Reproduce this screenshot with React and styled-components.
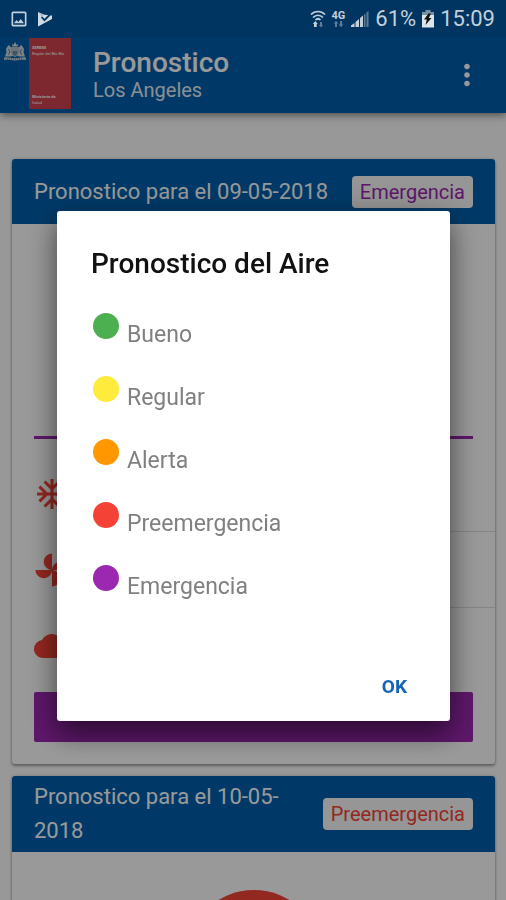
import styled, { createGlobalStyle, css } from "styled-components";
import { MdAcUnit, MdCloud, MdMoreVert, MdOutlineImage } from "react-icons/md";

const LEVELS = {
  bueno: { label: "Bueno", color: "#4caf50" },
  regular: { label: "Regular", color: "#ffeb3b" },
  alerta: { label: "Alerta", color: "#ff9800" },
  preemergencia: { label: "Preemergencia", color: "#f44336" },
  emergencia: { label: "Emergencia", color: "#9c27b0" },
};

const GlobalStyle = createGlobalStyle`
  * {
    box-sizing: border-box;
  }
  body {
    margin: 0;
    background: #fdfdfd;
    font-family: Roboto, "Liberation Sans", sans-serif;
  }
  #root {
    height: 100vh;
    overflow: hidden;
  }
`;

const StatusBar = styled.div`
  position: relative;
  z-index: 3;
  height: 37px;
  padding: 0 11px 0 9px;
  display: flex;
  align-items: center;
  background: #003562;
  color: #c3d0da;
  font-size: 22px;
`;

const Notifications = styled.div`
  display: flex;
  align-items: center;
  gap: 8px;
  margin-right: auto;
`;

const Signals = styled.div`
  display: flex;
  align-items: center;
  gap: 6px;
`;

const AppBar = styled.header`
  position: relative;
  height: 76px;
  padding: 0 22px 0 4px;
  display: flex;
  align-items: center;
  background: #0060ad;
  color: white;
  box-shadow: 0 2px 8px rgba(0, 0, 0, 0.5);
`;

const Heading = styled.div`
  flex: 1 1 auto;
  margin-left: 22px;
`;

const Title = styled.h1`
  margin: 0;
  font-weight: 500;
  font-size: 28px;
  line-height: 30px;
`;

const Subtitle = styled.div`
  font-size: 20px;
  line-height: 24px;
  opacity: 0.9;
`;

const MenuButton = styled.button`
  display: flex;
  padding: 0;
  border: 0;
  background: none;
  color: inherit;
  font-size: 34px;
`;

const Forecasts = styled.main`
  padding: 46px 11px 0 12px;
  display: flex;
  flex-direction: column;
  gap: 12px;
`;

const Card = styled.section`
  border-radius: 3px;
  overflow: hidden;
  background: white;
  box-shadow: 0 2px 3px rgba(0, 0, 0, 0.35), 0 0 3px rgba(0, 0, 0, 0.2);
`;

const CardHeader = styled.div`
  min-height: 65px;
  padding: 4px 22px;
  display: flex;
  align-items: center;
  justify-content: space-between;
  gap: 16px;
  background: #0060ad;
  color: white;
`;

const CardTitle = styled.h2`
  margin: 0;
  font-weight: 400;
  font-size: 22px;
  line-height: 34px;
`;

const Badge = styled.span`
  flex: 0 0 auto;
  padding: 0 8px;
  border-radius: 4px;
  background: #fafafa;
  color: ${(p) => p.$color};
  font-size: 20px;
  line-height: 32px;
`;

const CardBody = styled.div`
  padding: 38px 22px 22px;
`;

const Gauge = styled.div`
  width: 136px;
  height: 136px;
  margin: 0 auto 38px;
  border-radius: 50%;
  background: ${(p) => p.$color};
`;

const Rule = styled.hr`
  height: 3px;
  margin: 0 0 17px;
  border: 0;
  background: ${(p) => p.$color};
`;

const Conditions = styled.ul`
  margin: 0 -22px 8px 0;
  padding: 0;
  list-style: none;
`;

const Condition = styled.li`
  height: 76px;
  display: flex;
  align-items: center;
  gap: 24px;
  color: #f44336;
  font-size: 36px;
`;

const ConditionText = styled.div`
  flex: 1 1 auto;
  align-self: stretch;
  ${(p) =>
    p.$divided &&
    css`
      border-bottom: 1px solid #dedede;
    `}
`;

const Strip = styled.div`
  height: 50px;
  border-radius: 2px;
  background: ${(p) => p.$color};
`;

const Backdrop = styled.div`
  position: fixed;
  inset: 0;
  z-index: 2;
  padding: 32px 56px 0 57px;
  display: flex;
  align-items: center;
  background: rgba(0, 0, 0, 0.4);
`;

const Dialog = styled.div`
  flex: 1 1 auto;
  padding: 35px 34px 17px;
  border-radius: 3px;
  background: white;
  box-shadow: 0 14px 24px rgba(0, 0, 0, 0.4), 0 4px 36px rgba(0, 0, 0, 0.25);
`;

const DialogTitle = styled.h2`
  margin: 0 0 31px;
  font-weight: 500;
  font-size: 28px;
  line-height: 36px;
  color: #111;
`;

const Legend = styled.ul`
  margin: 0 0 71px;
  padding: 0 2px;
  display: flex;
  flex-direction: column;
  gap: 29px;
  list-style: none;
`;

const LegendItem = styled.li`
  display: flex;
  align-items: flex-end;
  gap: 8px;
  height: 34px;
  font-size: 23px;
  line-height: 24px;
  color: #808080;
`;

const Dot = styled.span`
  align-self: flex-start;
  width: 26px;
  height: 26px;
  border-radius: 50%;
  background: ${(p) => p.$color};
`;

const Actions = styled.div`
  display: flex;
  justify-content: flex-end;
`;

const DialogButton = styled.button`
  padding: 0 9px;
  border: 0;
  background: none;
  color: #1565b5;
  font: 700 19px/34px Roboto, "Liberation Sans", sans-serif;
`;

const FanIcon = () => (
  <svg width="36" height="36" viewBox="0 0 24 24" fill="currentColor">
    <path d="M12 12c0-3 2.500-5.500 5.500-5.500S23 9 23 12H12z" />
    <path d="M12 12c0 3-2.500 5.500-5.500 5.500S1 15 1 12h11z" />
    <path d="M12 12c-3 0-5.500-2.500-5.500-5.500S9 1 12 1v11z" />
    <path d="M12 12c3 0 5.500 2.500 5.500 5.500S15 23 12 23V12z" />
  </svg>
);

const PlayCheckIcon = () => (
  <svg width="16" height="16" viewBox="0 0 16 16" fill="none">
    <path d="M1 1l4.500 2.500L15 4.500V8L1 15.500z" fill="#cfdae4" />
    <path d="M1 1l6 2.500L5 6z" fill="#a9bccb" />
    <path d="M4.500 6l3 3.200L14 2.500" stroke="#003562" strokeWidth="1.800" />
  </svg>
);

const WifiIcon = () => (
  <svg width="16" height="18" viewBox="0 0 16 18" fill="none">
    <g stroke="currentColor" strokeWidth="1.700">
      <path d="M1 4.500c4-4 10-4 14 0" />
      <path d="M3 7.500c3-3 7-3 10 0" />
      <path d="M5.500 10c1.500-1.500 3.500-1.500 5 0" />
    </g>
    <path d="M4 17v-3H2.800L5.300 11l2.500 3H6.700v3z" fill="currentColor" />
    <path d="M10 12v3H8.800L11 17.500l2.200-2.500H12v-3z" fill="#5c7d99" />
  </svg>
);

const Lte = styled.div`
  display: flex;
  flex-direction: column;
  align-items: center;
  font-weight: 700;
  font-size: 11px;
  line-height: 10px;
`;

const DataArrowsIcon = () => (
  <svg width="11" height="6" viewBox="0 0 11 6" fill="#5c7d99">
    <path d="M2 6V2.500H.500L3 0l2.500 2.500H4V6z" />
    <path d="M7 0v3.500H5.500L8 6l2.500-2.500H9V0z" />
  </svg>
);

const SignalIcon = () => (
  <svg width="18" height="17" viewBox="0 0 18 17">
    <path
      d="M0 17v-1.500L3.500 13v4zM4.500 17v-5L8 9v8zM9 17V8l3-2.500V17z"
      fill="currentColor"
    />
    <path
      d="M13 17V4.800l1.500-1.300V17zM15.500 17V2.500L17.500 1v16z"
      fill="#5c7d99"
    />
  </svg>
);

const BatteryIcon = () => (
  <svg width="12" height="18" viewBox="0 0 12 18">
    <path d="M3.500 0h5v2H12v4H0V2h3.500z" fill="#7891a5" />
    <path d="M0 5h12v12.500H0z" fill="#dde5ea" />
    <path d="M6.500 3.500L2 9.500h2.800L3.500 15l6-7H6.800L9 3.500z" fill="#111" />
  </svg>
);

const CrestIcon = () => (
  <svg width="22" height="19" viewBox="0 0 22 19" fill="none">
    <path d="M8.500 4.500L8 2l1.500 1L11 0l1.500 3L14 2l-.500 2.500z" fill="#dfe5e8" />
    <path
      d="M7 5h8v6.500c0 2-2.500 3-4 3.500-1.500-.500-4-1.500-4-3.500z"
      fill="#b4c2cb"
    />
    <path
      d="M8.500 9h5v2.500c0 1-1.500 2-2.500 2.400-1-.400-2.500-1.400-2.500-2.400z"
      fill="#6f8da4"
    />
    <path
      d="M7 5.500L5 3 3.500 4.500 2 7l.500 3L1 14.500h6l2-1L7 11zM15 5.500L17 3l1.500 1.500L20 7l-.500 3 1.500 4.500h-6l-2-1L15 11z"
      fill="#d1dade"
    />
    <path d="M4 7l2 2-1.500 3.500M18 7l-2 2 1.500 3.500" stroke="#55758f" />
    <path
      d="M0 15.500c4-1 6 .500 11 .500s7-1.500 11-.500V18c-4-.500-6 .500-11 .500S4 17.500 0 18z"
      fill="#c6d0d5"
    />
    <path d="M3 17h16" stroke="#55758f" strokeDasharray="1 1" />
  </svg>
);

const Brand = styled.div`
  align-self: flex-start;
  padding-top: 1px;
  display: flex;
  align-items: flex-start;
  gap: 3px;
  > svg {
    margin-top: 4px;
  }
`;

const Plaque = styled.div`
  width: 42px;
  height: 71px;
  padding: 7px 3px 3px;
  display: flex;
  flex-direction: column;
  justify-content: space-between;
  background: #d0414d;
  color: white;
  font-size: 4px;
  line-height: 6px;
  white-space: nowrap;
  > div > b {
    display: block;
  }
`;

const Logo = () => (
  <Brand>
    <CrestIcon />
    <Plaque>
      <div>
        <b>SEREMI</b>
        Región del Bío Bío
      </div>
      <div>
        <b>Ministerio de</b>
        Salud
      </div>
    </Plaque>
  </Brand>
);

const CONDITION_ICONS = [MdAcUnit, FanIcon, MdCloud];

const ForecastCard = ({ date, level }) => {
  const { label, color } = LEVELS[level];

  return (
    <Card>
      <CardHeader>
        <CardTitle>{`Pronostico para el ${date}`}</CardTitle>
        <Badge $color={color}>{label}</Badge>
      </CardHeader>
      <CardBody>
        <Gauge $color={color} />
        <Rule $color={color} />
        <Conditions>
          {CONDITION_ICONS.map((Icon, i) => (
            <Condition key={i}>
              <Icon />
              <ConditionText $divided={i < CONDITION_ICONS.length - 1} />
            </Condition>
          ))}
        </Conditions>
        <Strip $color={color} />
      </CardBody>
    </Card>
  );
};

const LevelsDialog = () => (
  <Backdrop>
    <Dialog role="dialog" aria-modal="true" aria-labelledby="levels-title">
      <DialogTitle id="levels-title">Pronostico del Aire</DialogTitle>
      <Legend>
        {Object.entries(LEVELS).map(([key, { label, color }]) => (
          <LegendItem key={key}>
            <Dot $color={color} />
            {label}
          </LegendItem>
        ))}
      </Legend>
      <Actions>
        <DialogButton type="button">OK</DialogButton>
      </Actions>
    </Dialog>
  </Backdrop>
);

const App = () => (
  <>
    <GlobalStyle />
    <StatusBar>
      <Notifications>
        <MdOutlineImage size={20} />
        <PlayCheckIcon />
      </Notifications>
      <Signals>
        <WifiIcon />
        <Lte>
          4G
          <DataArrowsIcon />
        </Lte>
        <SignalIcon />
        <span>61%</span>
        <BatteryIcon />
        <span>15:09</span>
      </Signals>
    </StatusBar>
    <AppBar>
      <Logo />
      <Heading>
        <Title>Pronostico</Title>
        <Subtitle>Los Angeles</Subtitle>
      </Heading>
      <MenuButton type="button" aria-label="Menu">
        <MdMoreVert />
      </MenuButton>
    </AppBar>
    <Forecasts>
      <ForecastCard date="09-05-2018" level="emergencia" />
      <ForecastCard date="10-05-2018" level="preemergencia" />
    </Forecasts>
    <LevelsDialog />
  </>
);

export default App;
